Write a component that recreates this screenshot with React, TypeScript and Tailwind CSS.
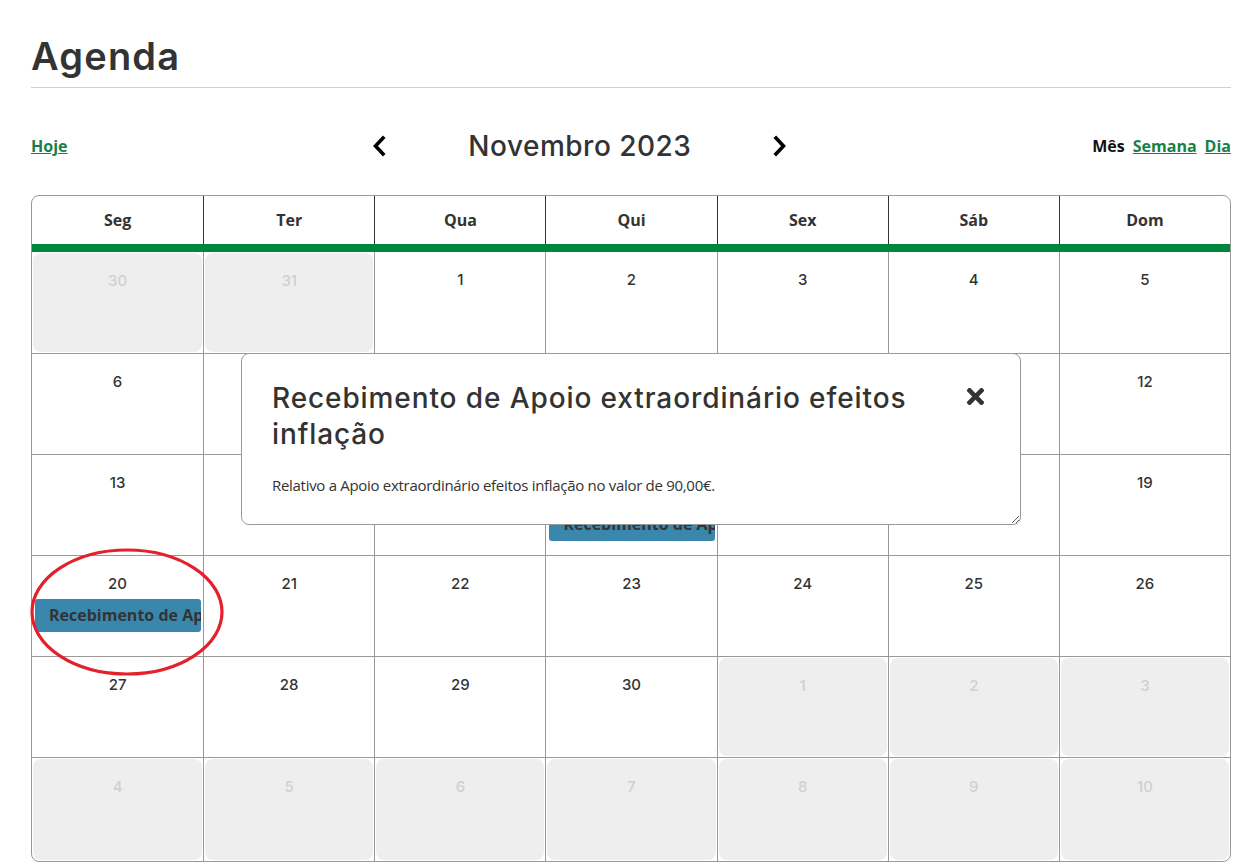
import { FaTimes } from 'react-icons/fa';

type Day = { n: number; muted?: boolean; event?: { title: string; offset?: boolean } };

const heading = { fontFamily: 'Inter, "Open Sans", sans-serif' };
const body = { fontFamily: '"Open Sans", "Liberation Sans", sans-serif' };

const weekDays = ['Seg', 'Ter', 'Qua', 'Qui', 'Sex', 'Sáb', 'Dom'];

const weeks: Day[][] = [
  [{ n: 30, muted: true }, { n: 31, muted: true }, { n: 1 }, { n: 2 }, { n: 3 }, { n: 4 }, { n: 5 }],
  [{ n: 6 }, { n: 7 }, { n: 8 }, { n: 9 }, { n: 10 }, { n: 11 }, { n: 12 }],
  [
    { n: 13 },
    { n: 14 },
    { n: 15 },
    { n: 16, event: { title: 'Recebimento de Apoio extraordinário efeitos inflação', offset: true } },
    { n: 17 },
    { n: 18 },
    { n: 19 },
  ],
  [
    { n: 20, event: { title: 'Recebimento de Apoio extraordinário efeitos inflação' } },
    { n: 21 },
    { n: 22 },
    { n: 23 },
    { n: 24 },
    { n: 25 },
    { n: 26 },
  ],
  [{ n: 27 }, { n: 28 }, { n: 29 }, { n: 30 }, { n: 1, muted: true }, { n: 2, muted: true }, { n: 3, muted: true }],
  [
    { n: 4, muted: true },
    { n: 5, muted: true },
    { n: 6, muted: true },
    { n: 7, muted: true },
    { n: 8, muted: true },
    { n: 9, muted: true },
    { n: 10, muted: true },
  ],
];

function Chevron({ dir }: { dir: 'left' | 'right' }) {
  return (
    <svg width="14" height="22" viewBox="0 0 14 22" className="shrink-0">
      <polyline
        points={dir === 'left' ? '11,3 3.5,11 11,19' : '3,3 10.5,11 3,19'}
        fill="none"
        stroke="#000"
        strokeWidth="3.6"
        strokeLinecap="square"
      />
    </svg>
  );
}

function DayCell({ day, row, col }: { day: Day; row: number; col: number }) {
  const borders = `${col > 0 ? 'border-l' : ''} ${row > 0 ? 'border-t' : ''}`;
  const height = row === 5 ? 'h-[104px]' : 'h-[101px]';
  const number = (
    <div
      className={`pt-[16px] text-center text-[15px] leading-[24px] font-medium ${
        day.muted ? 'text-[#d0d0d0]' : 'text-[#333]'
      }`}
      style={heading}
    >
      {day.n}
    </div>
  );
  return (
    <div className={`${height} ${borders} border-[#999] min-w-0`}>
      {day.muted ? (
        <div className="m-[1px] h-[calc(100%-2px)] rounded-[8px] bg-[#eeeeee]">{number}</div>
      ) : (
        <div>
          {number}
          {day.event && (
            <div
              className={`mr-[2px] ml-[3px] h-[33px] overflow-hidden rounded-[3px] bg-[#3a87ad] pl-[14px] text-[16px] leading-[33px] font-bold whitespace-nowrap text-[#333] ${
                day.event.offset ? 'mt-[13px]' : 'mt-[3px]'
              }`}
              style={body}
            >
              {day.event.title}
            </div>
          )}
        </div>
      )}
    </div>
  );
}

export default function App() {
  return (
    <div className="relative min-h-[868px] bg-white">
      <div className="ml-[31px] w-[1200px] pb-[6px]">
        <h1
          className="pt-[34px] text-[38px] leading-[44px] font-semibold tracking-[1.2px] text-[#333]"
          style={heading}
        >
          Agenda
        </h1>
        <div className="mt-[9px] h-px bg-[#d0d0d0]" />

        <div className="mt-[43px] flex h-[30px] items-center justify-between" style={body}>
          <a href="#" className="text-[16px] font-bold text-[#1a7f46] underline">
            Hoje
          </a>
          <div className="flex items-center">
            <Chevron dir="left" />
            <h2
              className="w-[387px] text-center text-[28px] leading-[34px] font-medium tracking-[0.5px] text-[#333]"
              style={heading}
            >
              Novembro 2023
            </h2>
            <Chevron dir="right" />
          </div>
          <div className="flex items-center gap-[8px] text-[16px] font-bold">
            <span className="text-[#111]">Mês</span>
            <a href="#" className="text-[#1a7f46] underline">
              Semana
            </a>
            <a href="#" className="text-[#1a7f46] underline">
              Dia
            </a>
          </div>
        </div>

        <div className="relative mt-[34px] rounded-[8px] border border-[#999]">
          <div className="grid grid-cols-7" style={body}>
            {weekDays.map((d, i) => (
              <div
                key={d}
                className={`flex h-[48px] items-center justify-center text-[16px] font-bold text-[#333] ${
                  i > 0 ? 'border-l border-[#333]' : ''
                }`}
              >
                {d}
              </div>
            ))}
          </div>
          <div className="h-[8px] bg-[#00853f]" />
          <div className="grid grid-cols-7">
            {weeks.map((week, r) =>
              week.map((day, c) => <DayCell key={`${r}-${c}`} day={day} row={r} col={c} />),
            )}
          </div>

          <div className="absolute top-[157px] left-[209px] h-[172px] w-[780px] resize overflow-auto rounded-[8px] border border-[#999] bg-white">
            <div className="flex items-start justify-between pt-[26px] pr-[32px] pl-[30px]">
              <h3
                className="w-[680px] text-[28px] leading-[36px] font-medium tracking-[0.9px] text-[#333]"
                style={heading}
              >
                Recebimento de Apoio extraordinário efeitos inflação
              </h3>
              <button type="button" className="mt-[4px] text-[#333]" aria-label="Fechar">
                <FaTimes size={25} />
              </button>
            </div>
            <p
              className="mt-[23px] pl-[30px] text-[15px] leading-[20px] tracking-[-0.3px] text-[#333]"
              style={body}
            >
              Relativo a Apoio extraordinário efeitos inflação no valor de 90,00€.
            </p>
          </div>
        </div>
      </div>

      <svg className="pointer-events-none absolute top-[546px] left-[28px]" width="198" height="132" viewBox="0 0 198 132">
        <ellipse cx="99" cy="66" rx="95" ry="62" fill="none" stroke="#e3202b" strokeWidth="3.2" />
      </svg>
    </div>
  );
}
